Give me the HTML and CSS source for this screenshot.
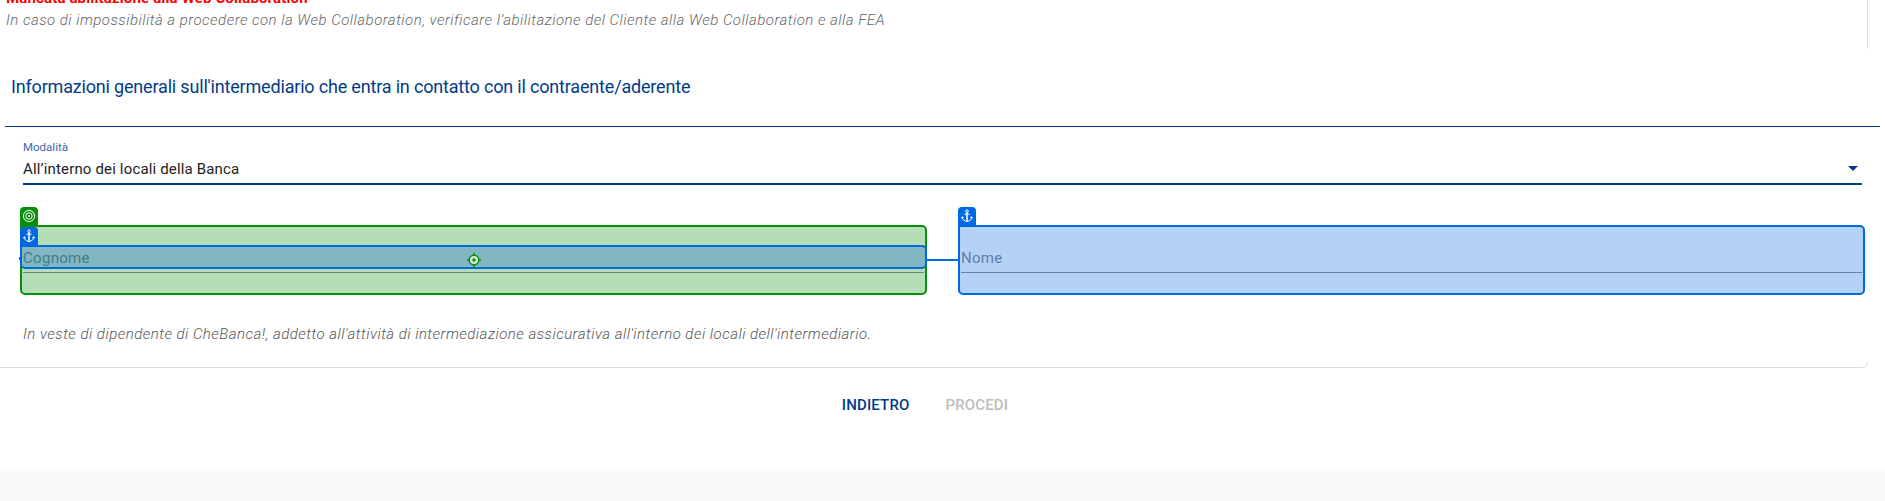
FILE: index.html
```html
<!DOCTYPE html>
<html lang="it">
<head>
<meta charset="utf-8">
<title>Intermediario</title>
<link rel="stylesheet" href="styles.css">
</head>
<body>
<svg class="defs" aria-hidden="true">
  <symbol id="anchor" viewBox="0 0 14 14"><g fill="none" stroke="#fff"><circle cx="7" cy="2.200" r="1.300"/><path d="M7 3.500v9" stroke-width="1.500"/><path d="M4.300 5.200h5.400M2.200 8c.2 2.600 2 4.200 4.800 4.500 2.800-.3 4.600-1.900 4.800-4.500M1.500 9.300l.7-1.500 1.500.8M12.500 9.300l-.7-1.500-1.500.8"/></g></symbol>
</svg>
<main class="page">
  <section class="card">
    <div class="notice">
      <p class="alert">Mancata abilitazione alla Web Collaboration</p>
      <p class="hint">In caso di impossibilità a procedere con la Web Collaboration, verificare l’abilitazione del Cliente alla Web Collaboration e alla FEA</p>
    </div>
    <div class="panel">
      <h2 class="title">Informazioni generali sull'intermediario che entra in contatto con il contraente/aderente</h2>
      <div class="form">
        <div class="select">
          <label class="label">Modalità</label>
          <div class="value"><span>All’interno dei locali della Banca</span><i class="arrow"></i></div>
        </div>
        <div class="fields">
          <div class="field field-target">
            <span class="badge badge-green"><svg width="14" height="14" viewBox="0 0 14 14" fill="none" stroke="#fff"><circle cx="7" cy="7" r="5.600"/><circle cx="7" cy="7" r="3.200"/><circle cx="7" cy="7" r="1" fill="#fff" stroke="none"/></svg></span>
            <span class="placeholder">Cognome</span>
            <div class="overlay"><span class="badge"><svg width="14" height="14"><use href="#anchor"/></svg></span></div>
            <svg class="aim" width="14" height="14" viewBox="0 0 14 14"><circle cx="7" cy="7" r="4.800" fill="#d4ead6" stroke="#078f0b" stroke-width="1.400"/><circle cx="7" cy="7" r="1.700" fill="#078f0b"/><path d="M7 0v3M7 11v3M0 7h3M11 7h3" stroke="#078f0b" stroke-width="1.600"/></svg>
            <i class="link"></i><i class="stub"></i>
          </div>
          <div class="field field-anchor">
            <span class="badge"><svg width="14" height="14"><use href="#anchor"/></svg></span>
            <span class="placeholder">Nome</span>
          </div>
        </div>
        <p class="role">In veste di dipendente di CheBanca!, addetto all'attività di intermediazione assicurativa all'interno dei locali dell'intermediario.</p>
      </div>
    </div>
  </section>
  <div class="actions"><button class="btn">INDIETRO</button><button class="btn" disabled>PROCEDI</button></div>
</main>
</body>
</html>
```
FILE: styles.css
```css
* { box-sizing: border-box; }
body { margin: 0; background: #fafafa; font-family: Roboto, sans-serif; overflow: hidden; }
p, h2 { margin: 0; white-space: nowrap; }
.defs { display: none; }
.page { height: 469px; background: #fff; }
.card { width: 1868px; height: 368px; border: solid #ddd; border-width: 0 1px 1px 0; border-radius: 0 0 5px 0; }
.notice { height: 49px; padding-left: 6px; }
.alert { height: 10px; line-height: 20px; font-size: 15px; font-weight: 700; letter-spacing: .15px; color: #f00; position: relative; top: -12px; }
.hint { line-height: 20px; font-size: 15px; font-style: italic; font-weight: 300; color: #666; letter-spacing: .48px; }
.panel { width: 1885px; height: 313px; background: #fff; padding: 0 5px; }
.title { height: 78px; padding: 26px 0 0 6px; border-bottom: 1px solid #003c8a; line-height: 24px; font-size: 18px; font-weight: 400; letter-spacing: -.18px; color: #003c8a; }
.form { padding: 14px 15px 0; }
.select { margin: 0 3px; height: 44px; border-bottom: 2px solid #003c8a; }
.label { display: block; height: 14px; line-height: 13px; font-size: 11.500px; color: #3a69a8; }
.value { display: flex; justify-content: space-between; height: 26px; line-height: 28px; font-size: 15px; letter-spacing: .16px; color: #222; }
.arrow { width: 0; height: 0; margin: 11px 4px 0 0; border: solid transparent; border-width: 5px 5.500px 0; border-top-color: #003c8a; }
.fields { display: grid; grid-template-columns: 907px 907px; gap: 31px; margin-top: 40px; }
.field { position: relative; height: 70px; border: 2px solid; border-radius: 5px; padding: 20px 1px 0; }
.field::after { content: ""; position: absolute; left: 1px; right: 1px; top: 45px; height: 1px; background: #648a73; }
.field-target { border-color: #078f0b; background: #b5deb6; border-top-left-radius: 0; }
.field-anchor { border-color: #0068e0; background: #b4d2f6; border-top-left-radius: 0; }
.field-anchor::after { background: #6684ac; }
.placeholder { position: relative; z-index: 2; display: block; line-height: 22px; font-size: 15px; letter-spacing: .3px; color: #5f7fa8; }
.field-target .placeholder { color: #437d89; }
.badge { position: absolute; left: -2px; top: -20px; width: 18px; height: 20px; padding: 2px; border-radius: 4px 4px 0 0; background: #0068e0; }
.badge svg { display: block; }
.badge-green { background: #078f0b; }
.overlay { position: absolute; left: -2px; right: -2px; top: 18px; height: 24px; border: 2px solid #0068e0; border-radius: 0 5px 5px 5px; background: #80b7c2; }
.aim { position: absolute; left: 445px; top: 26px; }
.link { position: absolute; left: 904px; top: 32px; width: 33px; height: 2px; background: #0068e0; }
.stub { position: absolute; left: -3px; top: 30px; width: 2px; height: 3px; background: #0068e0; }
.role { margin: 29px 0 0 3px; line-height: 20px; font-size: 15px; font-style: italic; font-weight: 300; color: #555; letter-spacing: .48px; }
.actions { display: flex; justify-content: center; gap: 36px; padding: 27px 35px 0 0; }
.btn { border: 0; padding: 0; background: none; font: 500 15px/20px Roboto, sans-serif; letter-spacing: .15px; color: #003c8a; }
.btn:disabled { color: #bdbdbd; }
```
